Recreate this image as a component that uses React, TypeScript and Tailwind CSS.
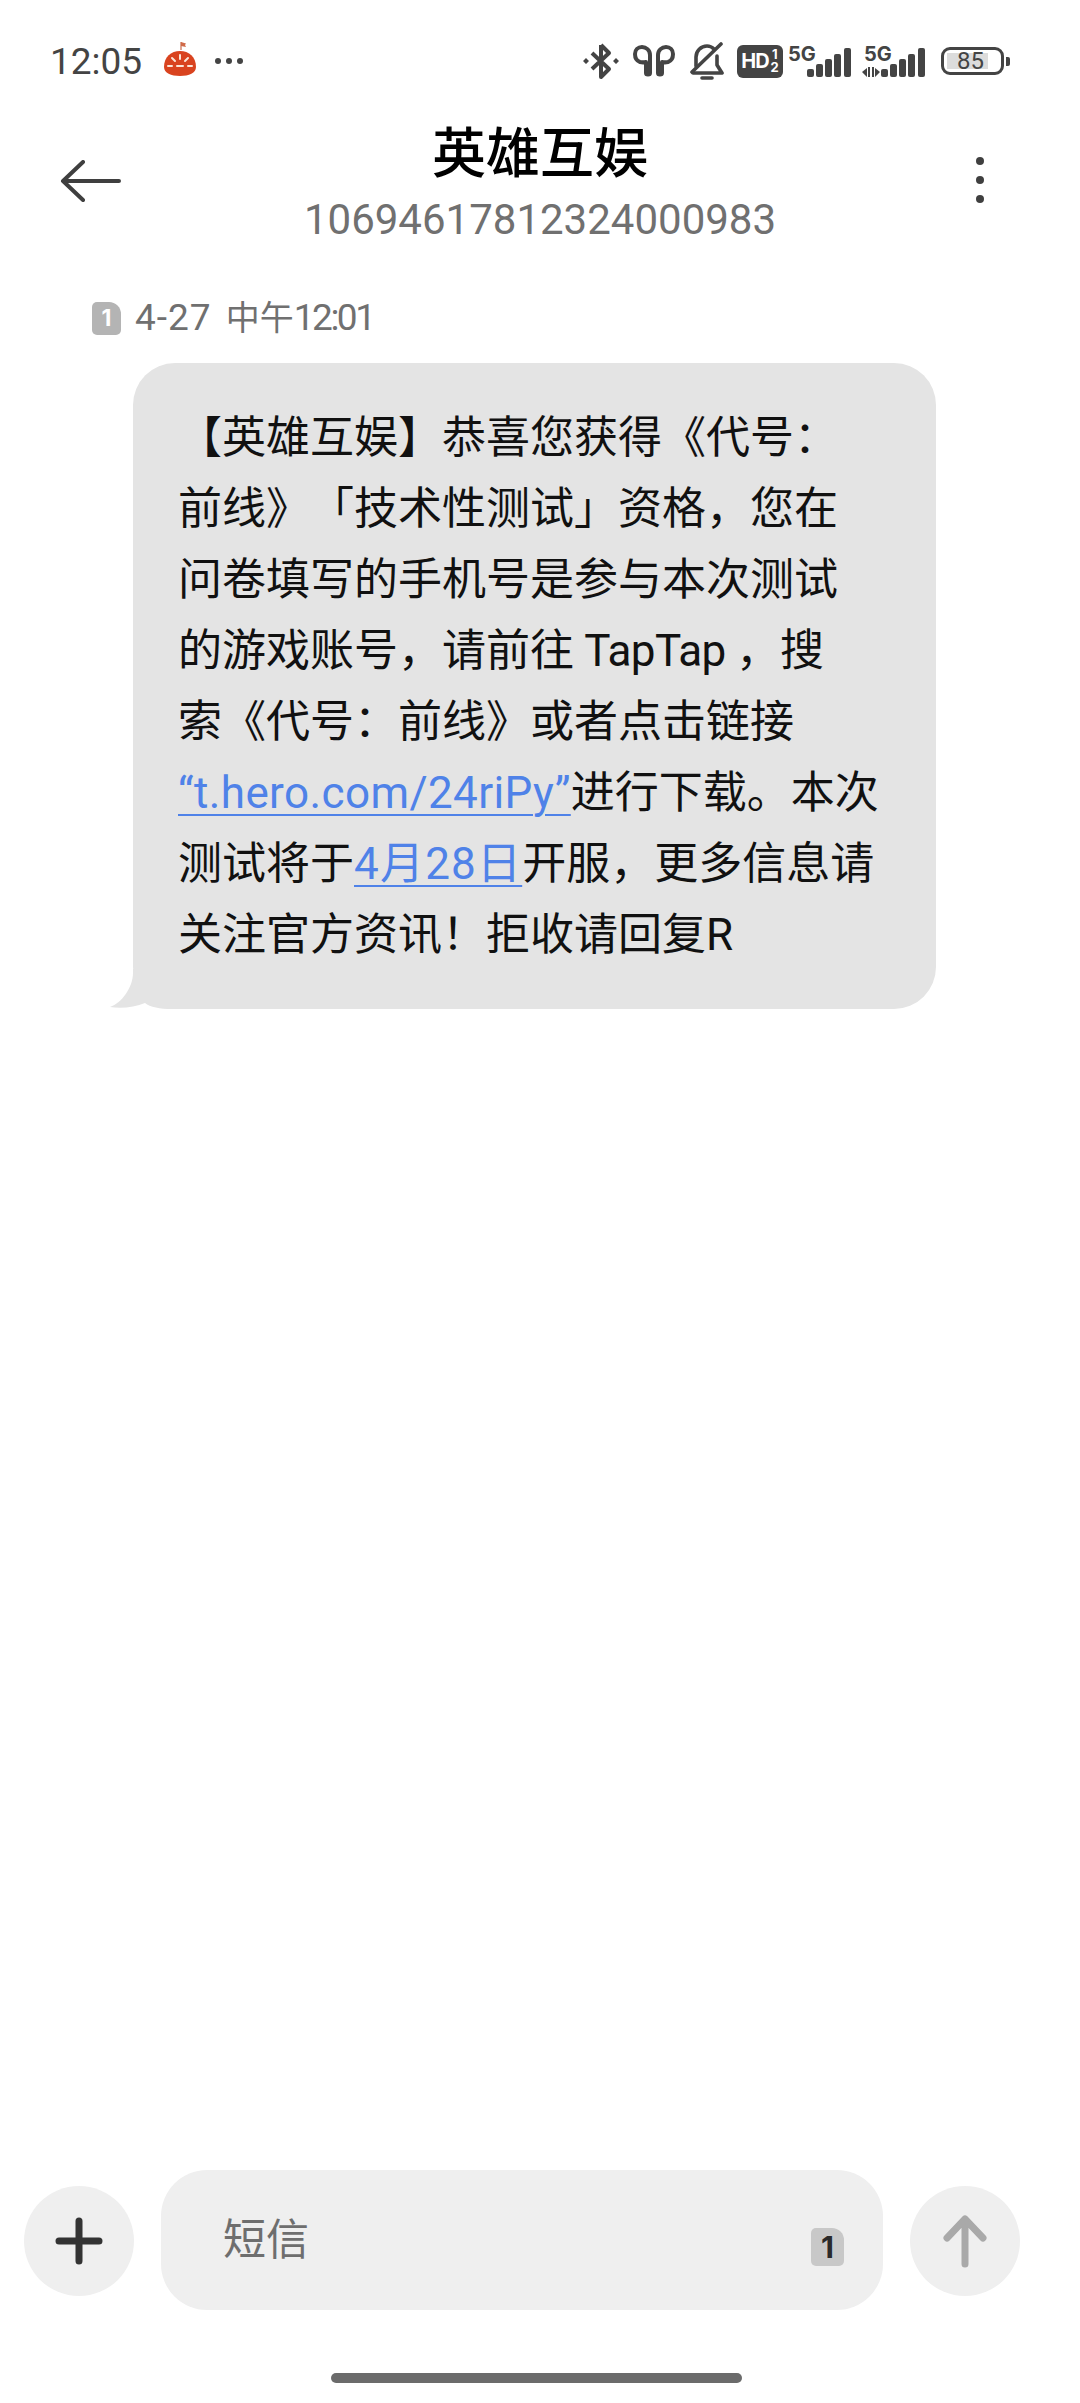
const fontCls = "font-['Roboto','Noto_Sans_CJK_SC',sans-serif] [text-spacing-trim:space-all]";
const linkCls = 'text-[#4f82e8] underline underline-offset-[6px] decoration-2';

const lines: React.ReactNode[] = [
  '【英雄互娱】恭喜您获得《代号：',
  '前线》「技术性测试」资格，您在',
  '问卷填写的手机号是参与本次测试',
  <>的游戏账号，请前往<span className="tracking-[-0.6px]"> TapTap </span>，搜</>,
  '索《代号：前线》或者点击链接',
  <><a className={`${linkCls} tracking-[0.4px]`}>“t.hero.com/24riPy”</a>进行下载。本次</>,
  <>测试将于<a className={`${linkCls} tracking-[1.2px]`}>4月28日</a>开服，更多信息请</>,
  '关注官方资讯！拒收请回复R',
];

function PieIcon() {
  return (
    <svg width="36" height="36" viewBox="0 0 36 36">
      <path d="M19 1v8" stroke="#c9694a" strokeWidth="1.2" />
      <path d="M19 1l5 1.5-1 1.5 1 2-5-1z" fill="#d06a48" />
      <path d="M2 26C2 16 9 10 18 10s16 6 16 16c0 6-7 9-16 9S2 32 2 26z" fill="#d9431f" />
      <path d="M18 14v4M10 17l3 3M26 17l-3 3M6 25h4M26 25h4M15 25h6" stroke="#fbe6d8" strokeWidth="2" strokeLinecap="round" />
    </svg>
  );
}

function Bluetooth() {
  return (
    <svg width="36" height="38" viewBox="0 0 36 38" fill="none" stroke="#444" strokeWidth="4" strokeLinejoin="round">
      <path d="M18 3v32l8-8L9 11M18 3l8 8L9 27" />
      <path d="M3 16l3 3-3 3-3-3zM33 16l3 3-3 3-3-3z" fill="#444" stroke="none" />
    </svg>
  );
}

function Earbuds() {
  return (
    <svg width="42" height="32" viewBox="0 0 42 32" fill="none" stroke="#444" strokeWidth="4" strokeLinecap="round" strokeLinejoin="round">
      <path d="M7 17C4 16 2 13 2 9c0-4 3-7 7-7s8 3 8 8v18c0 2-4 2-4 0V17c-2 .5-4 .5-6 0z" />
      <path d="M35 17c3-1 5-4 5-8 0-4-3-7-7-7s-8 3-8 8v18c0 2 4 2 4 0V17c2 .5 4 .5 6 0z" />
    </svg>
  );
}

function BellOff() {
  return (
    <svg width="34" height="38" viewBox="0 0 34 38" fill="none" stroke="#444" strokeWidth="3.6" strokeLinecap="round" strokeLinejoin="round">
      <path d="M6 24V15C6 9 11 4 17 4c3 0 5 1 7 3" />
      <path d="M27 14v9l5 8H3" />
      <path d="M2 30L31 2" />
      <path d="M12 36h10" />
    </svg>
  );
}

function HdBadge() {
  return (
    <div className="flex h-[33px] w-[46px] items-center justify-center rounded-[6px] bg-[#444] text-white font-['Inter',sans-serif] font-bold">
      <span className="text-[20px] leading-none tracking-[-1px]">HD</span>
      <span className="ml-[2px] flex flex-col items-center text-[13px] leading-[13px]">
        <span>1</span>
        <span>2</span>
      </span>
    </div>
  );
}

function Signal({ arrows }: { arrows?: boolean }) {
  return (
    <div className="relative h-[31px] w-[64px]">
      <span className={`absolute top-[-2px] text-[20px] leading-[20px] font-bold text-[#444] font-['Inter',sans-serif] ${arrows ? 'left-[2px]' : 'left-0'}`}>5G</span>
      <svg className="absolute inset-0" width="64" height="31" viewBox="0 0 64 31" fill="#444">
        {arrows && <path d="M0 26l5-4v9zM6 21h2v10H6zM10 21h2v10h-2zM13 22l5 4-5 5z" />}
        <rect x="19" y="23" width="7" height="8" rx="2" />
        <rect x="28" y="18" width="7" height="13" rx="2" />
        <rect x="37" y="13" width="7" height="18" rx="2" />
        <rect x="46" y="8" width="7" height="23" rx="2" />
        <rect x="56" y="2" width="7" height="29" rx="2" />
      </svg>
    </div>
  );
}

function Battery() {
  return (
    <div className="flex items-center gap-[2px]">
      <div className="flex h-[28px] w-[63px] items-center rounded-[9px] border-[3px] border-[#444] p-[3px]">
        <div className="flex h-full w-[41px] items-center justify-center bg-[#dcdcdc] pl-[6px] text-[24px] leading-none text-[#444] font-['Roboto',sans-serif]">85</div>
      </div>
      <div className="h-[9px] w-[4px] rounded-r-[2px] bg-[#444]" />
    </div>
  );
}

function StatusBar() {
  return (
    <div className="mt-[40px] flex h-[42px] items-center justify-between pl-[50px] pr-[70px]">
      <div className="flex items-center">
        <span className="text-[37px] leading-none text-[#444] font-['Roboto',sans-serif]">12:05</span>
        <span className="ml-[20px] -mt-[4px]"><PieIcon /></span>
        <div className="ml-[17px] flex gap-[5px]">
          <i className="h-[6px] w-[6px] rounded-full bg-[#444]" />
          <i className="h-[6px] w-[6px] rounded-full bg-[#444]" />
          <i className="h-[6px] w-[6px] rounded-full bg-[#444]" />
        </div>
      </div>
      <div className="flex items-center">
        <Bluetooth />
        <span className="ml-[14px]"><Earbuds /></span>
        <span className="ml-[15px]"><BellOff /></span>
        <span className="ml-[13px]"><HdBadge /></span>
        <span className="ml-[5px]"><Signal /></span>
        <span className="ml-[10px]"><Signal arrows /></span>
        <span className="ml-[15px]"><Battery /></span>
      </div>
    </div>
  );
}

function Header() {
  return (
    <div className="mt-[41px] flex items-start pl-[60px] pr-[96px]">
      <svg className="mt-[37px] shrink-0" width="62" height="42" viewBox="0 0 62 42" fill="none" stroke="#3f3f3f" strokeWidth="4" strokeLinecap="round" strokeLinejoin="round">
        <path d="M59 21H3M23 2L3 21l20 19" />
      </svg>
      <div className="flex flex-1 flex-col items-center pr-[18px]">
        <div className="text-[54px] leading-[64px] font-medium text-black">英雄互娱</div>
        <div className="mt-[8px] text-[42px] leading-[50px] text-[#707070]">10694617812324000983</div>
      </div>
      <div className="mt-[34px] flex shrink-0 flex-col gap-[11px]">
        <i className="h-[8px] w-[8px] rounded-full bg-[#3f3f3f]" />
        <i className="h-[8px] w-[8px] rounded-full bg-[#3f3f3f]" />
        <i className="h-[8px] w-[8px] rounded-full bg-[#3f3f3f]" />
      </div>
    </div>
  );
}

function SimBadge({ cls, textCls }: { cls: string; textCls: string }) {
  return (
    <div className={`flex items-center justify-center rounded-[5px] rounded-tr-[12px] font-bold font-['Inter',sans-serif] ${cls}`}>
      <span className={textCls}>1</span>
    </div>
  );
}

function Bubble() {
  return (
    <div className="relative ml-[133px] mt-[23px] w-[803px] rounded-[42px] bg-[#e4e4e4] pb-[38px] pl-[45px] pt-[40px] text-[44px] leading-[71px] text-[#111]">
      {lines.map((line, i) => (
        <div key={i} className="whitespace-nowrap">{line}</div>
      ))}
      <svg className="absolute bottom-0 left-[-23px]" width="70" height="40" viewBox="0 0 70 40" fill="#e4e4e4">
        <path d="M23 0V4C23 18 12 34 0 38C12 40 25 38 35 34C40 38 50 40 62 40H70V0z" />
      </svg>
    </div>
  );
}

function InputBar() {
  return (
    <div className="flex items-center pl-[24px]">
      <div className="mt-[2px] flex h-[110px] w-[110px] items-center justify-center rounded-full bg-[#efefef]">
        <svg width="48" height="48" viewBox="0 0 48 48" stroke="#333" strokeWidth="7" strokeLinecap="round">
          <path d="M24 4v40M4 24h40" />
        </svg>
      </div>
      <div className="ml-[27px] flex h-[140px] w-[722px] rounded-[46px] bg-[#efefef]">
        <span className="ml-[62px] mt-[1px] flex-1 self-center text-[43px] leading-none text-[#6e6e6e]">短信</span>
        <div className="mb-[44px] mr-[39px] self-end">
          <SimBadge cls="h-[38px] w-[33px] bg-[#c8c8c8]" textCls="text-[30px] leading-none text-[#2a2a2a]" />
        </div>
      </div>
      <div className="ml-[27px] mt-[2px] flex h-[110px] w-[110px] items-center justify-center rounded-full bg-[#efefef]">
        <svg width="48" height="56" viewBox="0 0 48 56" fill="none" stroke="#a9a9a9" strokeWidth="7" strokeLinecap="round" strokeLinejoin="round">
          <path d="M24 51V6M6 25L24 6l18 19" />
        </svg>
      </div>
    </div>
  );
}

export default function App() {
  return (
    <div className={`flex h-[2403px] w-[1080px] flex-col overflow-hidden bg-white ${fontCls}`}>
      <StatusBar />
      <Header />
      <div className="ml-[92px] mt-[51px] flex items-center">
        <SimBadge cls="h-[33px] w-[29px] bg-[#b4b4b4]" textCls="text-[23px] leading-none text-white" />
        <span className="ml-[14px] whitespace-pre text-[37px] leading-[44px] text-[#707070]">
          <span className="tracking-[1px]">4-27 </span>
          <span className="ml-[4px] text-[34px]">中午</span>
          <span className="tracking-[-2.5px]">12:01</span>
        </span>
      </div>
      <Bubble />
      <div className="flex-1" />
      <InputBar />
      <div className="mb-[20px] ml-[331px] mt-[63px] h-[10px] w-[411px] rounded-full bg-[#6b6b6b]" />
    </div>
  );
}
